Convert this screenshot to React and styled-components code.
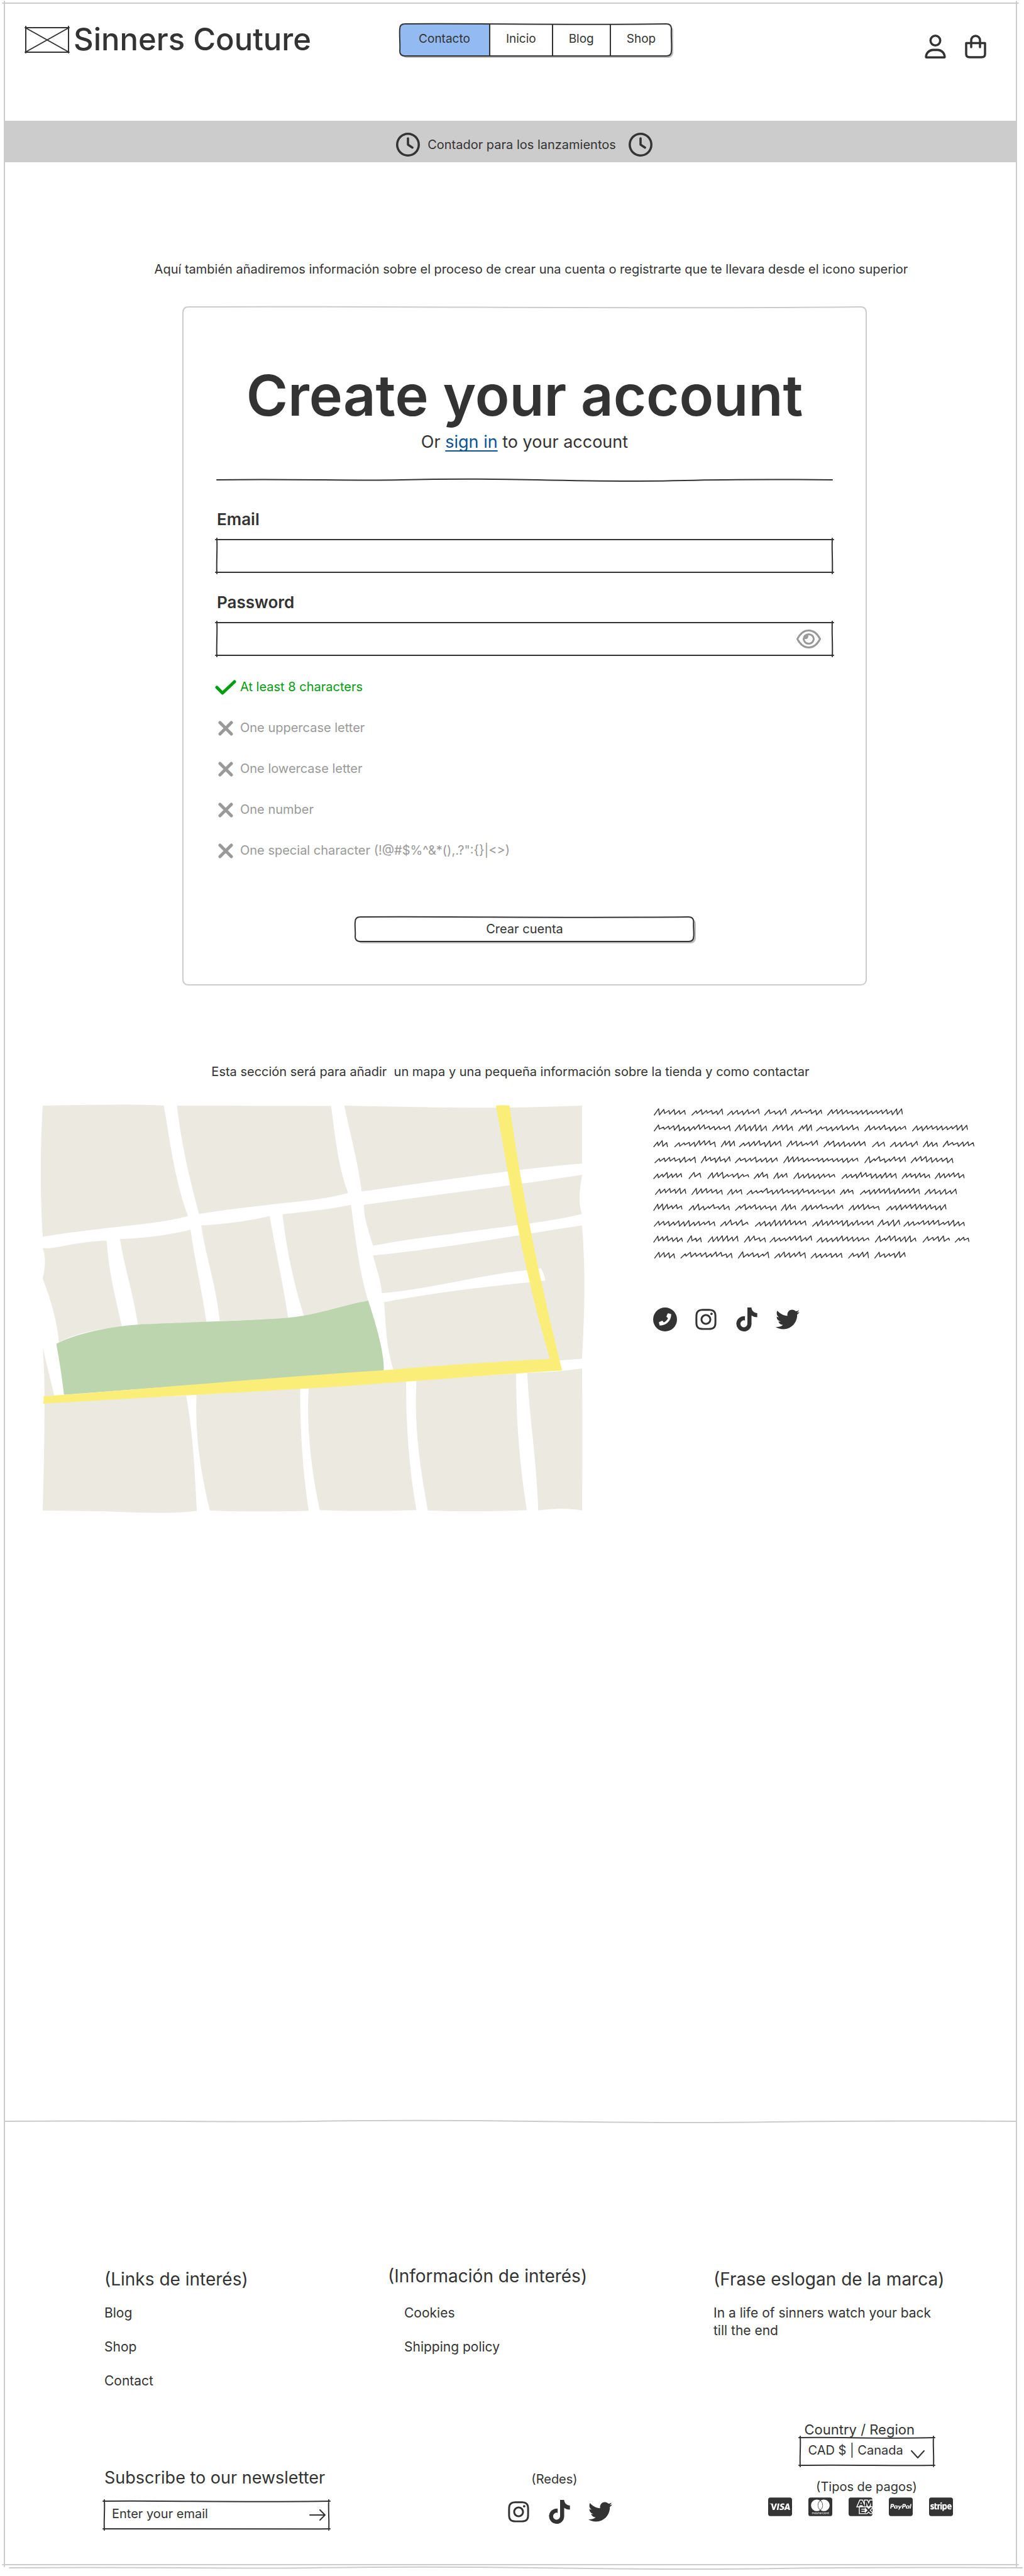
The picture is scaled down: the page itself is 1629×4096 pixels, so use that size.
import React from "react";
import styled, { createGlobalStyle } from "styled-components";
import {
  FaRegClock,
  FaRegUser,
  FaInstagram,
  FaTiktok,
  FaTwitter,
  FaCcVisa,
  FaCcMastercard,
  FaCcAmex,
  FaCcPaypal,
  FaCcStripe,
} from "react-icons/fa6";

const ink = "#333333";
const line = "#cccccc";
const muted = "#999999";

const GlobalStyle = createGlobalStyle`
  *, *::before, *::after { box-sizing: border-box; }
  body {
    margin: 0;
    background: #ffffff;
    color: ${ink};
    font-family: Inter, "Open Sans", sans-serif;
    font-size: 20px;
    line-height: 24px;
  }
  h1, h2, p, ul { margin: 0; padding: 0; }
  ul { list-style: none; }
  a { color: inherit; text-decoration: none; }
  button, input, select {
    font: inherit;
    color: inherit;
    background: transparent;
    border: 0;
    padding: 0;
    margin: 0;
    outline: none;
  }
  button { cursor: pointer; }
  svg { display: block; flex: none; }
`;

/* ---------- hand-drawn outlines ---------- */

const Outline = styled.svg`
  position: absolute;
  inset: 0;
  width: 100%;
  height: 100%;
  overflow: visible;
  pointer-events: none;
`;

const Stroke = styled.path`
  fill: none;
  stroke: ${(p) => p.$color};
  stroke-width: ${(p) => p.$width || 2}px;
  stroke-linecap: round;
  stroke-linejoin: round;
  vector-effect: non-scaling-stroke;
`;

function Sketch({ w, h, radius = 0, over = 0, color = ink, bend = 1 }) {
  const r = radius;
  const edges = r
    ? [
        `M${r} 0 C${w * 0.3} ${-bend} ${w * 0.6} ${bend * 2} ${w - r} 0 Q${w} 0 ${w} ${r}`,
        `C${w - bend} ${h * 0.3} ${w + bend} ${h * 0.7} ${w} ${h - r} Q${w} ${h} ${w - r} ${h}`,
        `C${w * 0.7} ${h - bend} ${w * 0.4} ${h + bend} ${r} ${h} Q0 ${h} 0 ${h - r}`,
        `C${bend} ${h * 0.7} ${-bend} ${h * 0.3} 0 ${r} Q0 0 ${r} 0`,
      ]
    : [
        `M${-over} 0 C${w * 0.3} ${-bend} ${w * 0.6} ${bend * 2} ${w + over} 0`,
        `M${w} ${-over} C${w - bend} ${h * 0.3} ${w + bend} ${h * 0.7} ${w} ${h + over}`,
        `M${-over} ${h} C${w * 0.4} ${h - bend} ${w * 0.7} ${h + bend} ${w + over} ${h}`,
        `M0 ${-over} C${bend} ${h * 0.3} ${-bend} ${h * 0.7} 0 ${h + over}`,
      ];
  return (
    <Outline viewBox={`0 0 ${w} ${h}`} preserveAspectRatio="none" aria-hidden="true">
      <Stroke $color={color} d={edges.join(" ")} />
    </Outline>
  );
}

const RuleBox = styled.svg`
  width: 100%;
  height: 4px;
  overflow: visible;
`;

function Rule({ color = ink }) {
  return (
    <RuleBox viewBox="0 0 1000 4" preserveAspectRatio="none" aria-hidden="true">
      <Stroke $color={color} d="M0 2 C130 0 220 4 300 2 S430 0 520 2 S680 5 760 3 S900 1 1000 2" />
    </RuleBox>
  );
}

/* ---------- page ---------- */

const Page = styled.div`
  padding: 5px 3px 10px 7px;
`;

const Frame = styled.div`
  position: relative;
  margin-right: 9px;
`;

const FrameShadow = styled.div`
  margin: 3px 0 0 8px;
`;

const Header = styled.header`
  display: flex;
  align-items: flex-start;
  height: 187px;
  padding: 33px 48px 0 32px;
`;

const Brand = styled.a`
  display: flex;
  align-items: center;
  gap: 6px;
  margin-top: 2px;
  font-size: 49px;
  font-weight: 500;
  line-height: 46px;
  white-space: nowrap;
`;

const Nav = styled.nav`
  position: relative;
  display: flex;
  height: 51px;
  margin-left: 141px;
  border-radius: 8px;
  box-shadow: 3px 3px 0 #bdbdbd;
`;

const NavLink = styled.a`
  display: flex;
  align-items: center;
  padding: 0 25px 3px;
  border-right: 2px solid ${ink};
  background: ${(p) => (p.$active ? "#94baf2" : "#ffffff")};
  font-size: 19px;

  &:first-child {
    padding: 0 30px 3px;
    border-radius: 8px 0 0 8px;
  }
  &:last-of-type {
    border-right: 0;
    border-radius: 0 8px 8px 0;
  }
`;

const HeaderIcons = styled.div`
  display: flex;
  gap: 28px;
  margin: 17px 0 0 auto;
`;

const Banner = styled.div`
  position: relative;
  display: flex;
  align-items: center;
  justify-content: center;
  gap: 12px;
  height: 66px;
  padding: 10px 0 0 44px;
  background: ${line};

  & > svg:last-child {
    margin-left: 8px;
  }
`;

const Main = styled.main`
  display: flex;
  flex-direction: column;
  padding: 158px 0 965px;
`;

const Note = styled.p`
  text-align: center;
  white-space: pre-wrap;
`;

const IntroNote = styled(Note)`
  padding-left: 66px;
`;

const VisitNote = styled(Note)`
  margin-top: 126px;
`;

/* ---------- account card ---------- */

const Card = styled.form`
  position: relative;
  display: flex;
  flex-direction: column;
  margin: 48px 239px 0 284px;
  padding: 87px 54px 69px;
`;

const Title = styled.h1`
  font-size: 90px;
  font-weight: 600;
  line-height: 108px;
  text-align: center;
  white-space: nowrap;
`;

const Subtitle = styled.p`
  margin: 3px 0 41px;
  font-size: 27px;
  line-height: 34px;
  text-align: center;

  a {
    color: #0b5394;
    text-decoration: underline;
    text-decoration-thickness: 2px;
    text-underline-offset: 4px;
    text-decoration-skip-ink: none;
  }
`;

const Label = styled.label`
  margin: ${(p) => p.$top}px 0 16px;
  font-size: 26px;
  font-weight: 600;
  line-height: 32px;
`;

const Field = styled.div`
  position: relative;
  display: flex;
  align-items: center;
  height: ${(p) => p.$height}px;
  padding: 0 ${(p) => p.$right || 12}px 0 12px;
`;

const TextInput = styled.input`
  flex: 1;
  min-width: 0;
  height: 100%;
  padding-bottom: 4px;

  &::placeholder {
    color: ${ink};
    opacity: 1;
  }
`;

const Checks = styled.ul`
  margin-top: 17px;
`;

const Check = styled.li`
  display: flex;
  align-items: center;
  height: 65px;
  color: ${(p) => (p.$ok ? "#009e0f" : muted)};
`;

const Mark = styled.span`
  display: flex;
  justify-content: center;
  width: 28px;
  margin-right: 9px;
  padding-top: 3px;
`;

const Submit = styled.button`
  position: relative;
  align-self: center;
  width: 55%;
  height: 39px;
  margin-top: 74px;
  padding-bottom: 2px;
  border-radius: 8px;
  background: #ffffff;
  box-shadow: 3px 3px 0 #bdbdbd;
`;

/* ---------- map and contact ---------- */

const Visit = styled.section`
  display: grid;
  grid-template-columns: 865fr 516fr;
  column-gap: 107px;
  margin-top: 40px;
  padding: 0 64px 0 58px;
`;

const MapDrawing = styled.svg`
  width: 100%;
  height: 650px;
`;

const About = styled.div`
  padding-top: 5px;
`;

const Scribble = styled.svg`
  width: 100%;
  height: 243px;
`;

const Social = styled.div`
  display: flex;
  gap: 27px;
  margin-top: ${(p) => p.$top}px;
  padding-left: ${(p) => p.$left || 0}px;
`;

/* ---------- footer ---------- */

const FooterBox = styled.footer`
  padding-bottom: 57px;
`;

const Grid = styled.div`
  display: grid;
  grid-template-columns: 451fr 518fr 451fr;
  padding: ${(p) => p.$top}px 31px 0 159px;
`;

const Column = styled.div`
  display: flex;
  flex-direction: column;
  align-items: ${(p) => p.$align || "flex-start"};
  padding: ${(p) => p.$top || 0}px 0 0 ${(p) => p.$left || 0}px;
`;

const Heading = styled.h2`
  font-size: 28px;
  font-weight: 400;
  line-height: 36px;
  white-space: nowrap;
`;

const Newsletter = styled.form`
  display: flex;
  flex-direction: column;
  width: 357px;
`;

const NewsletterLabel = styled.label`
  margin-bottom: 19px;
  font-size: 27px;
  line-height: 36px;
  white-space: nowrap;
`;

const Links = styled.ul`
  display: flex;
  flex-direction: column;
  gap: 26px;
  margin-top: ${(p) => p.$top}px;
  padding-left: ${(p) => p.$left || 0}px;
  font-size: 21px;
  line-height: 28px;
`;

const Slogan = styled.p`
  max-width: 360px;
  margin-top: 22px;
  font-size: 21px;
  line-height: 28px;
`;

const Small = styled.p`
  margin-top: ${(p) => p.$top || 0}px;
  padding-right: ${(p) => p.$right || 0}px;
`;

const Region = styled.div`
  width: 212px;
`;

const RegionLabel = styled.label`
  display: block;
  padding-left: 7px;
  font-size: 22px;
  line-height: 26px;
`;

const Picker = styled.div`
  position: relative;
  display: flex;
  height: 44px;

  & > svg:last-child {
    position: absolute;
    right: 14px;
    top: 20px;
    pointer-events: none;
  }
`;

const Select = styled.select`
  flex: 1;
  appearance: none;
  padding: 0 40px 4px 13px;
`;

const Cards = styled.div`
  display: flex;
  gap: 26px;
  margin-top: 3px;
  padding-right: 20px;

  svg {
    width: 38px;
    height: 34px;
  }
`;

/* ---------- icons ---------- */

const Placeholder = () => (
  <svg width="72" height="44" viewBox="0 0 72 44" fill="none" stroke={ink} strokeWidth="2" strokeLinecap="round">
    <path d="M1 3 L71 3 M2 1 L2 43 M1 42 L71 42 M70 1 L70 43 M3 4 L69 41 M3 41 L69 4" />
  </svg>
);

const Bag = () => (
  <svg width="34" height="38" viewBox="0 0 34 38" fill="none" stroke={ink} strokeWidth="3.500" strokeLinecap="round" strokeLinejoin="round">
    <path d="M2 13.5 H32 V31 Q32 36 26.500 36 H7.500 Q2 36 2 31 Z" />
    <path d="M10 20 V9 A7 7 0 0 1 24 9 V20" />
  </svg>
);

const Eye = () => (
  <svg width="39" height="30" viewBox="0 0 39 30" fill="none" stroke={muted} strokeWidth="3">
    <path d="M1.500 15 C6 6 12 1.500 19.500 1.500 S33 6 37.500 15 C33 24 27 28.500 19.500 28.500 S6 24 1.500 15 Z" />
    <ellipse cx="19.500" cy="15" rx="8" ry="7.500" />
    <path d="M19 9 C19 14 17 16 13 15 C13 11 15 9 19 9 Z" fill={muted} stroke="none" />
  </svg>
);

const Tick = () => (
  <svg width="34" height="24" viewBox="0 0 34 24" fill="none" stroke="currentColor" strokeWidth="5" strokeLinecap="round" strokeLinejoin="round">
    <path d="M3 12 L12 21 L31 3" />
  </svg>
);

const Cross = () => (
  <svg width="24" height="24" viewBox="0 0 24 24" fill="none" stroke="currentColor" strokeWidth="5" strokeLinecap="round">
    <path d="M3 3 L21 21 M21 3 L3 21" />
  </svg>
);

const PhoneCircle = () => (
  <svg width="38" height="38" viewBox="0 0 512 512">
    <circle cx="256" cy="256" r="256" fill={ink} />
    <path
      transform="translate(124 124) scale(0.515)"
      fill="#ffffff"
      d="M493.4 24.6l-104-24c-11.3-2.6-22.9 3.300-27.500 13.900l-48 112c-4.200 9.800-1.400 21.300 6.900 28l60.600 49.600c-36 76.700-98.900 140.500-177.200 177.200l-49.600-60.600c-6.800-8.300-18.200-11.100-28-6.900l-112 48C3.900 366.500-2 378.100.6 389.400l24 104C27.100 504.200 36.700 512 48 512c256.100 0 464-207.500 464-464 0-11.200-7.700-20.900-18.600-23.400z"
    />
  </svg>
);

const Arrow = () => (
  <svg width="26" height="18" viewBox="0 0 26 18" fill="none" stroke={ink} strokeWidth="2" strokeLinecap="round" strokeLinejoin="round">
    <path d="M1 9 H25 M17 1 L25 9 L17 17" />
  </svg>
);

const Chevron = () => (
  <svg width="22" height="13" viewBox="0 0 22 13" fill="none" stroke={ink} strokeWidth="2" strokeLinecap="round" strokeLinejoin="round">
    <path d="M1 1 L11 12 L21 1" />
  </svg>
);

/* ---------- map ---------- */

const blocks = [
  "M33 177 Q200 174 260 173.500 Q320 174 362 177 C375 260 390 420 428 541 C360 565 250 572 180 585 Q100 596 33 609 C25 450 27 300 33 177Z",
  "M398 177 L817 178 C828 280 836 380 863 465 C790 490 700 495 640 505 Q540 518 458 534 C430 410 408 290 398 177Z",
  "M853 177 Q1100 184 1260 184 Q1400 182 1499 177 L1499 368 C1300 388 1100 428 900 460 C890 360 866 260 853 177Z",
  "M906 504 C1100 470 1300 443 1499 405 C1492 460 1488 500 1499 534 C1400 564 1250 580 1140 601 Q1020 618 931 639 C915 580 906 540 906 504Z",
  "M931 671 C1150 644 1330 602 1499 572 C1508 700 1507 850 1499 1011 L1412 1019 Q1200 1025 986 1047 C966 970 966 900 961 825 L955 795 C950 740 940 715 931 671Z",
  "M33 647 C70 650 120 625 207 622 C212 730 235 830 248 905 C170 915 120 930 77 957 C72 880 50 800 33 747 C38 720 44 680 33 647Z",
  "M243 617 Q360 610 435 586 C445 680 465 780 478 890 L292 900 C278 790 255 710 243 617Z",
  "M464 572 Q570 565 650 541 C665 650 686 760 700 877 L514 887 C505 770 475 670 464 572Z",
  "M685 535 Q800 522 871 504 C882 600 892 720 918 821 C850 835 800 860 743 871 C715 760 695 650 685 535Z",
  "M33 975 Q50 1060 64 1132 L38 1136 Q38 1050 33 975Z",
  "M38 1150 L423 1133 C442 1260 446 1380 452 1512 Q380 1525 200 1514 L33 1511 Q38 1300 38 1150Z",
  "M451 1130 L733 1108 C732 1260 742 1400 756 1512 Q600 1517 487 1511 C460 1370 447 1260 451 1130Z",
  "M756 1105 L1021 1085 C1020 1240 1030 1380 1049 1510 Q900 1515 786 1510 C762 1370 750 1240 756 1105Z",
  "M1049 1082 L1320 1060 C1320 1240 1332 1380 1349 1510 Q1200 1517 1080 1511 C1054 1340 1043 1220 1049 1082Z",
  "M1350 1058 Q1440 1055 1499 1043 Q1501 1280 1499 1511 Q1450 1500 1380 1511 C1375 1340 1357 1220 1350 1058Z",
];

function CityMap() {
  return (
    <MapDrawing viewBox="28 173 1478 1347" preserveAspectRatio="none" role="img" aria-label="Mapa">
      {blocks.map((d) => (
        <path key={d} d={d} fill="#ece9e1" />
      ))}
      <path
        d="M955 795 C1080 783 1230 733 1352 719 L1387 713 Q1396 730 1399 753 L1360 759 C1230 775 1090 795 961 825Z"
        fill="#ffffff"
      />
      <path
        d="M70 962 C130 925 220 905 300 898 C450 890 600 885 700 876 C780 868 860 830 918 820 C945 920 962 1000 960 1050 L91 1130 Q82 1040 70 962Z"
        fill="#bdd5ae"
      />
      <path
        d="M1265 177 Q1284 174 1302 177 C1330 420 1380 740 1445 1050 C1300 1060 1100 1080 850 1102 C600 1120 300 1140 34 1159 Q37 1147 35 1135 L92 1130 C300 1112 600 1078 960 1049 Q1200 1025 1412 1012 C1330 680 1300 400 1265 177Z"
        fill="#faee78"
      />
    </MapDrawing>
  );
}

/* ---------- scribbled paragraph: start and end of each word ---------- */

const words = [
  [110, 240, 268, 397, 417, 550, 573, 663, 684, 812, 837, 1150],
  [110, 428, 449, 581, 606, 690, 716, 770, 791, 966, 993, 1165, 1193, 1423],
  [108, 165, 196, 366, 391, 447, 467, 641, 666, 795, 822, 995, 1025, 1076, 1100, 1214, 1238, 1297, 1321, 1450],
  [113, 283, 307, 428, 450, 626, 653, 964, 993, 1163, 1187, 1362],
  [108, 225, 256, 305, 335, 506, 529, 586, 611, 667, 695, 867, 897, 1125, 1149, 1265, 1288, 1409],
  [115, 242, 268, 395, 417, 477, 499, 866, 890, 944, 974, 1222, 1245, 1377],
  [108, 226, 256, 425, 451, 621, 643, 703, 727, 901, 926, 1053, 1084, 1333],
  [110, 364, 388, 503, 534, 746, 774, 1028, 1047, 1139, 1157, 1410],
  [108, 228, 249, 307, 336, 461, 488, 576, 595, 770, 792, 1010, 1037, 1207, 1237, 1348, 1372, 1429],
  [112, 195, 222, 436, 463, 590, 615, 744, 768, 897, 925, 1008, 1035, 1162],
];

function scribblePath() {
  let seed = 7;
  const rand = () => {
    seed = (seed * 16807) % 2147483647;
    return seed / 2147483647;
  };
  let d = "";
  words.forEach((row, i) => {
    const top = 97 + i * 94.6;
    for (let k = 0; k < row.length; k += 2) {
      const from = row[k];
      const to = row[k + 1];
      const n = Math.max(2, Math.round((to - from) / 21));
      const step = (to - from) / n;
      d += `M${from} ${(top + 38).toFixed(1)}`;
      for (let j = 0; j < n; j += 1) {
        const x = from + j * step;
        const high = top + rand() * 15;
        const low = top + 26 + rand() * 12;
        d += `L${(x + step * 0.85).toFixed(1)} ${high.toFixed(1)}L${(x + step).toFixed(1)} ${low.toFixed(1)}`;
      }
    }
  });
  return d;
}

const paragraph = scribblePath();

function ScribbledText() {
  return (
    <Scribble viewBox="100 90 1360 910" preserveAspectRatio="none" role="img" aria-label="Información de la tienda">
      <Stroke $color={ink} $width={1.4} d={paragraph} />
    </Scribble>
  );
}

/* ---------- app ---------- */

const rules = [
  ["At least 8 characters", true],
  ["One uppercase letter", false],
  ["One lowercase letter", false],
  ["One number", false],
  ['One special character (!@#$%^&*(),.?":{}|<>)', false],
];

const networks = [
  ["Instagram", FaInstagram],
  ["TikTok", FaTiktok],
  ["Twitter", FaTwitter],
];

const payments = [
  ["Visa", FaCcVisa],
  ["Mastercard", FaCcMastercard],
  ["Amex", FaCcAmex],
  ["PayPal", FaCcPaypal],
  ["Stripe", FaCcStripe],
];

const Networks = () =>
  networks.map(([name, Icon]) => (
    <a key={name} href="#" aria-label={name}>
      <Icon size={38} />
    </a>
  ));

export default function App() {
  return (
    <Page>
      <GlobalStyle />
      <Frame>
        <Sketch w={1610} h={4073} over={3} color={line} bend={2} />
        <Header>
          <Brand href="#">
            <Placeholder />
            Sinners Couture
          </Brand>
          <Nav>
            <NavLink href="#" $active>Contacto</NavLink>
            <NavLink href="#">Inicio</NavLink>
            <NavLink href="#">Blog</NavLink>
            <NavLink href="#">Shop</NavLink>
            <Sketch w={436} h={51} radius={8} />
          </Nav>
          <HeaderIcons>
            <a href="#" aria-label="Cuenta"><FaRegUser size={38} /></a>
            <a href="#" aria-label="Carrito"><Bag /></a>
          </HeaderIcons>
        </Header>

        <Banner>
          <FaRegClock size={38} />
          <span>Contador para los lanzamientos</span>
          <FaRegClock size={38} />
        </Banner>

        <Main>
          <IntroNote>
            Aquí también añadiremos información sobre el proceso de crear una cuenta o registrarte que te llevara desde el icono superior
          </IntroNote>

          <Card onSubmit={(e) => e.preventDefault()}>
            <Sketch w={1088} h={1079} radius={9} color={line} bend={2} />
            <Title>Create your account</Title>
            <Subtitle>
              Or <a href="#">sign in</a> to your account
            </Subtitle>
            <Rule />
            <Label htmlFor="email" $top={45}>Email</Label>
            <Field $height={52}>
              <TextInput id="email" type="email" />
              <Sketch w={980} h={52} over={2} />
            </Field>
            <Label htmlFor="password" $top={32}>Password</Label>
            <Field $height={52} $right={18}>
              <TextInput id="password" type="password" />
              <button type="button" aria-label="Show password"><Eye /></button>
              <Sketch w={980} h={52} over={2} />
            </Field>
            <Checks>
              {rules.map(([text, ok]) => (
                <Check key={text} $ok={ok}>
                  <Mark>{ok ? <Tick /> : <Cross />}</Mark>
                  {text}
                </Check>
              ))}
            </Checks>
            <Submit type="submit">
              <Sketch w={539} h={39} radius={8} />
              Crear cuenta
            </Submit>
          </Card>

          <VisitNote>
            {"Esta sección será para añadir  un mapa y una pequeña información sobre la tienda y como contactar"}
          </VisitNote>

          <Visit>
            <CityMap />
            <About>
              <ScribbledText />
              <Social $top={75} $left={2}>
                <a href="#" aria-label="Teléfono"><PhoneCircle /></a>
                <Networks />
              </Social>
            </About>
          </Visit>
        </Main>

        <FooterBox>
          <Rule color={line} />
          <Grid $top={226}>
            <Column $top={5}>
              <Heading>(Links de interés)</Heading>
              <Links $top={22}>
                <li><a href="#">Blog</a></li>
                <li><a href="#">Shop</a></li>
                <li><a href="#">Contact</a></li>
              </Links>
            </Column>
            <Column>
              <Heading>(Información de interés)</Heading>
              <Links $top={27} $left={26}>
                <li><a href="#">Cookies</a></li>
                <li><a href="#">Shipping policy</a></li>
              </Links>
            </Column>
            <Column $top={5}>
              <Heading>(Frase eslogan de la marca)</Heading>
              <Slogan>In a life of sinners watch your back till the end</Slogan>
            </Column>
          </Grid>
          <Grid $top={50}>
            <Column $top={72}>
              <Newsletter onSubmit={(e) => e.preventDefault()}>
                <NewsletterLabel htmlFor="newsletter">Subscribe to our newsletter</NewsletterLabel>
                <Field $height={44} $right={5}>
                  <TextInput id="newsletter" type="email" placeholder="Enter your email" />
                  <button type="submit" aria-label="Subscribe"><Arrow /></button>
                  <Sketch w={357} h={44} over={2} />
                </Field>
              </Newsletter>
            </Column>
            <Column $top={80} $left={28} $align="center">
              <Small $right={16}>(Redes)</Small>
              <Social $top={21}>
                <Networks />
              </Social>
            </Column>
            <Column $left={36} $align="center">
              <Region>
                <RegionLabel htmlFor="region">Country / Region</RegionLabel>
                <Picker>
                  <Select id="region" defaultValue="ca">
                    <option value="ca">CAD $ | Canada</option>
                  </Select>
                  <Sketch w={212} h={44} over={2} />
                  <Chevron />
                </Picker>
              </Region>
              <Small $top={22}>(Tipos de pagos)</Small>
              <Cards>
                {payments.map(([name, Icon]) => (
                  <Icon key={name} title={name} />
                ))}
              </Cards>
            </Column>
          </Grid>
        </FooterBox>
      </Frame>
      <FrameShadow>
        <Rule color={line} />
      </FrameShadow>
    </Page>
  );
}
